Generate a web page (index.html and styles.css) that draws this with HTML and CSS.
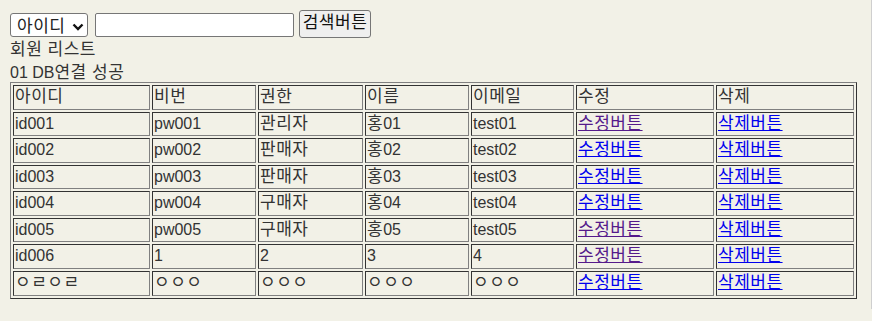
FILE: index.html
```html
<!DOCTYPE html>
<html lang="ko">
<head>
<meta charset="utf-8">
<title>회원 리스트</title>
<link rel="stylesheet" href="styles.css">
</head>
<body>
<form class="search">
  <select class="field-select">
    <option>아이디</option>
    <option>이름</option>
  </select>
  <input class="field-input" type="text">
  <button class="field-button" type="button"><span class="ko">검색버튼</span></button>
</form>
<div class="line"><span class="ko">회원 리스트</span></div>
<div class="line">01 DB<span class="ko">연결 성공</span></div>
<table class="list">
  <colgroup>
    <col class="c1"><col class="c2"><col class="c3"><col class="c4"><col class="c5"><col class="c6"><col class="c7">
  </colgroup>
  <tr><td><span class="ko">아이디</span></td><td><span class="ko">비번</span></td><td><span class="ko">권한</span></td><td><span class="ko">이름</span></td><td><span class="ko">이메일</span></td><td><span class="ko">수정</span></td><td><span class="ko">삭제</span></td></tr>
  <tr><td>id001</td><td>pw001</td><td><span class="ko">관리자</span></td><td><span class="ko">홍</span>01</td><td>test01</td><td><a class="lnk visited" href="#u1"><span class="ko">수정버튼</span></a></td><td><a class="lnk" href="#d1"><span class="ko">삭제버튼</span></a></td></tr>
  <tr><td>id002</td><td>pw002</td><td><span class="ko">판매자</span></td><td><span class="ko">홍</span>02</td><td>test02</td><td><a class="lnk" href="#u2"><span class="ko">수정버튼</span></a></td><td><a class="lnk" href="#d2"><span class="ko">삭제버튼</span></a></td></tr>
  <tr><td>id003</td><td>pw003</td><td><span class="ko">판매자</span></td><td><span class="ko">홍</span>03</td><td>test03</td><td><a class="lnk" href="#u3"><span class="ko">수정버튼</span></a></td><td><a class="lnk" href="#d3"><span class="ko">삭제버튼</span></a></td></tr>
  <tr><td>id004</td><td>pw004</td><td><span class="ko">구매자</span></td><td><span class="ko">홍</span>04</td><td>test04</td><td><a class="lnk" href="#u4"><span class="ko">수정버튼</span></a></td><td><a class="lnk" href="#d4"><span class="ko">삭제버튼</span></a></td></tr>
  <tr><td>id005</td><td>pw005</td><td><span class="ko">구매자</span></td><td><span class="ko">홍</span>05</td><td>test05</td><td><a class="lnk visited" href="#u5"><span class="ko">수정버튼</span></a></td><td><a class="lnk" href="#d5"><span class="ko">삭제버튼</span></a></td></tr>
  <tr><td>id006</td><td>1</td><td>2</td><td>3</td><td>4</td><td><a class="lnk visited" href="#u6"><span class="ko">수정버튼</span></a></td><td><a class="lnk" href="#d6"><span class="ko">삭제버튼</span></a></td></tr>
  <tr><td><span class="ko">ㅇㄹㅇㄹ</span></td><td><span class="ko">ㅇㅇㅇ</span></td><td><span class="ko">ㅇㅇㅇ</span></td><td><span class="ko">ㅇㅇㅇ</span></td><td><span class="ko">ㅇㅇㅇ</span></td><td><a class="lnk" href="#u7"><span class="ko">수정버튼</span></a></td><td><a class="lnk" href="#d7"><span class="ko">삭제버튼</span></a></td></tr>
</table>
</body>
</html>
```
FILE: styles.css
```css
html {
  background: #f2f1e7;
  border-right: 1px solid #cfcfcf;
}
body {
  margin: 10px;
  color: #333333;
  font-family: "Liberation Sans", "Noto Sans CJK KR", sans-serif;
  font-size: 16px;
}
.ko {
  font-family: "Noto Sans CJK KR", sans-serif;
  font-size: 17px;
  letter-spacing: 0.5px;
  line-height: 16px;
}
.search {
  margin: 0;
  display: flex;
  align-items: flex-end;
  height: 27px;
}
.field-select {
  -webkit-appearance: none;
  appearance: none;
  width: 78px;
  height: 24px;
  font-family: "Noto Sans CJK KR", sans-serif;
  font-size: 17px;
  letter-spacing: 0.5px;
  line-height: 20px;
  color: #222;
  background-color: #ffffff;
  background-image: url("data:image/svg+xml;utf8,<svg xmlns='http://www.w3.org/2000/svg' width='12' height='8' viewBox='0 0 12 8'><path d='M1.5 1.5 L6 6 L10.5 1.5' fill='none' stroke='%23111' stroke-width='2.4'/></svg>");
  background-repeat: no-repeat;
  background-position: 61px 9px;
  background-size: 12px 8px;
  border: 1px solid #767676;
  border-radius: 3px;
  padding: 0 0 0 6px;
  margin: 0 7px 0 0;
}
.field-input {
  width: 199px;
  height: 24px;
  box-sizing: border-box;
  border: 1px solid #767676;
  border-radius: 2px;
  background: #ffffff;
  margin: 0 5px 0 0;
  padding: 0 3px;
  font-size: 16px;
}
.field-button {
  width: 72px;
  height: 28px;
  box-sizing: border-box;
  margin: 0 0 -1px 0;
  padding: 0;
  color: #111;
  background: #efefef;
  border: 1px solid #767676;
  border-radius: 3px;
  line-height: 24px;
}
.line {
  line-height: 23px;
}
.search + .line {
  margin-top: 1px;
}
.list {
  width: 847px;
  table-layout: fixed;
  border-collapse: separate;
  border-spacing: 2px;
  border-style: solid;
  border-width: 1px;
  border-color: #808080 #333333 #333333 #808080;
  margin-top: -2px;
}
.list td {
  border-style: solid;
  border-width: 1px;
  border-color: #333333 #808080 #808080 #333333;
  padding: 1px;
  line-height: 20.57px;
  white-space: nowrap;
}
.c1 { width: 137px; }
.c2 { width: 104px; }
.c3 { width: 105px; }
.c4 { width: 104px; }
.c5 { width: 103px; }
.c6 { width: 138px; }
.c7 { width: 138px; }
.lnk {
  color: #0000ee;
  text-decoration: underline;
}
.lnk.visited {
  color: #551a8b;
}
```
